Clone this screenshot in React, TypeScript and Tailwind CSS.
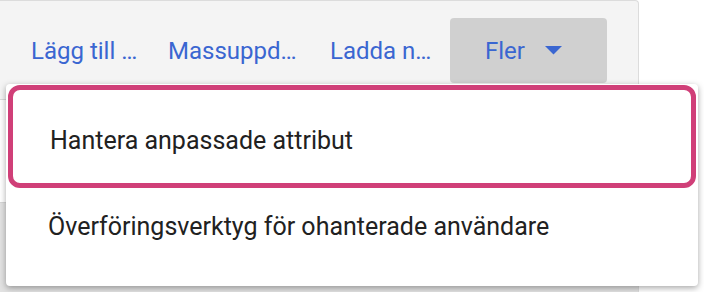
import React from "react";

export default function App() {
  return (
    <div
      className="relative w-[704px] h-[292px] overflow-hidden bg-white"
      style={{ fontFamily: "Roboto, 'Noto Sans', sans-serif" }}
    >
      <div className="flex flex-col w-[639px] h-full bg-[#f4f4f4] border-t border-r border-[#dcdcdc] rounded-tr-[4px]">
        <div className="h-[99px] border-b border-[#dadada] shrink-0">
          <div className="flex items-center h-[65px] mt-[17px] pl-[31px] text-[24px] leading-[28px] text-[#3a66d1] whitespace-nowrap">
            <span className="w-[137px]">Lägg till …</span>
            <span className="w-[162px]">Massuppd…</span>
            <span className="w-[120px]">Ladda n…</span>
            <div className="flex items-center h-[65px] w-[157px] pl-[35px] bg-[#d0d0d0] rounded-[4px]">
              <span className="w-[60px]">Fler</span>
              <svg width="17" height="9" viewBox="0 0 17 9" className="shrink-0">
                <polygon points="0,0 17,0 8.5,8.5" fill="#3a66d1" />
              </svg>
            </div>
          </div>
        </div>
        <div className="h-[103px] bg-white border-b border-[#d6d6d6] shrink-0" />
        <div className="flex-1 bg-[#e2e2e2]" />
      </div>

      <div className="absolute left-[6px] top-[84px] w-[692px] h-[202px] bg-white rounded-[4px] shadow-[0_2px_6px_rgba(0,0,0,0.35)] text-[25px] leading-[30px] text-[#212121] whitespace-nowrap">
        <div className="mx-[2px] mt-[1px] h-[103px] rounded-[12px] border-[5px] border-[#d03f78] pl-[37px] pt-[36px]">
          Hantera anpassade attribut
        </div>
        <div className="pl-[42px] pt-[24px]">Överföringsverktyg för ohanterade användare</div>
      </div>
    </div>
  );
}
